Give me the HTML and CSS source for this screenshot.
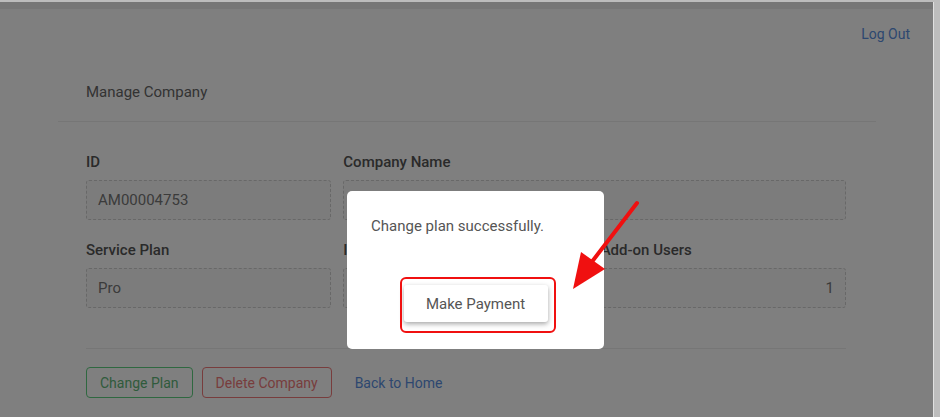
FILE: index.html
```html
<!DOCTYPE html>
<html lang="en">
<head>
    <meta charset="UTF-8">
    <meta name="viewport" content="width=device-width, initial-scale=1.0">
    <title>Manage Company</title>
    <link rel="stylesheet" href="styles.css">
</head>
<body>
    <div class="viewport">
        <div class="topbar"></div>
        <div class="nav">
            <a href="#" class="link">Log Out</a>
        </div>

        <div class="card">
            <div class="card-header">Manage Company</div>
            <div class="card-body">
                <div class="grid">
                    <div class="field">
                        <label>ID</label>
                        <div class="box">AM00004753</div>
                    </div>
                    <div class="field span-2">
                        <label>Company Name</label>
                        <div class="box"></div>
                    </div>
                    <div class="field">
                        <label>Service Plan</label>
                        <div class="box">Pro</div>
                    </div>
                    <div class="field">
                        <label>Included Users</label>
                        <div class="box"></div>
                    </div>
                    <div class="field">
                        <label>Add-on Users</label>
                        <div class="box right">1</div>
                    </div>
                </div>

                <div class="actions">
                    <button class="btn btn-green">Change Plan</button>
                    <button class="btn btn-red">Delete Company</button>
                    <a href="#" class="link back">Back to Home</a>
                </div>
            </div>
        </div>

        <!-- modal -->
        <div class="backdrop">
            <div class="modal">
                <p class="modal-text">Change plan successfully.</p>
                <div class="modal-footer">
                    <button class="pay">Make Payment</button>
                    <span class="highlight"></span>
                </div>
            </div>
            <svg class="arrow" width="80" height="100" viewBox="0 0 80 100">
                <line x1="72" y1="8" x2="26" y2="68" stroke="#f01010" stroke-width="4" stroke-linecap="round"/>
                <polygon points="8,94 16,57 40,74" fill="#f01010"/>
            </svg>
        </div>
    </div>
</body>
</html>
```

FILE: styles.css
```css
* {
    box-sizing: border-box;
    margin: 0;
    padding: 0;
}
body {
    background: #bdbdbd;
    font-family: Roboto, "Liberation Sans", sans-serif;
    overflow: hidden;
}
.viewport {
    position: relative;
    width: 934px;
    height: 415px;
    margin-top: 2px;
    background: #fff;
    border-right: 1px solid #e0e0e0;
    overflow: hidden;
}
.topbar {
    height: 7px;
    background: #eee;
}
.nav {
    display: flex;
    justify-content: flex-end;
    padding: 17px 23px 0 0;
    height: 56px;
}
.link {
    color: #5a8fe0;
    font-size: 14px;
    text-decoration: none;
}
.card {
    margin-left: 58px;
    width: 818px;
}
.card-header {
    padding: 18px 28px 20px;
    font-size: 15px;
    color: #666;
    border-bottom: 1px solid #ececec;
}
.card-body {
    padding: 30px 30px 0 28px;
}
.grid {
    display: grid;
    grid-template-columns: repeat(3, 1fr);
    column-gap: 12px;
    row-gap: 20px;
}
.span-2 {
    grid-column: span 2;
}
.field label {
    display: block;
    font-size: 15px;
    font-weight: 500;
    color: #555;
    line-height: 20px;
    margin-bottom: 8px;
}
.box {
    height: 40px;
    border: 1px dashed #d0d0d0;
    border-radius: 3px;
    background: #f9f9f9;
    padding: 0 11px;
    display: flex;
    align-items: center;
    font-size: 15px;
    color: #777;
}
.box.right {
    justify-content: flex-end;
}
.actions {
    margin-top: 40px;
    border-top: 1px solid #ececec;
    padding-top: 18px;
    display: flex;
    align-items: center;
    gap: 9px;
}
.btn {
    height: 31px;
    padding: 0 13px;
    background: #fff;
    border-radius: 4px;
    font-family: inherit;
    font-size: 14px;
}
.btn-green {
    border: 1px solid #5fd080;
    color: #5fb678;
}
.btn-red {
    border: 1px solid #f07a7a;
    color: #f07a7a;
}
.back {
    margin-left: 14px;
}
.backdrop {
    position: absolute;
    inset: 0;
    background: rgba(0, 0, 0, 0.5);
}
.modal {
    position: absolute;
    left: 347px;
    top: 189px;
    width: 257px;
    height: 158px;
    background: #fff;
    border-radius: 5px;
    padding: 25px 24px 0;
}
.modal-text {
    font-size: 15px;
    color: #555;
    line-height: 20px;
}
.modal-footer {
    position: relative;
    display: flex;
    justify-content: center;
    margin-top: 49px;
}
.pay {
    width: 144px;
    height: 37px;
    background: #fff;
    border: none;
    border-radius: 3px;
    box-shadow: 0 2px 5px rgba(0, 0, 0, 0.35);
    font-family: inherit;
    font-size: 15px;
    color: #555;
}
.highlight {
    position: absolute;
    left: 29px;
    top: -8px;
    width: 156px;
    height: 56px;
    border: 2px solid #f01010;
    border-radius: 6px;
}
.arrow {
    position: absolute;
    left: 565px;
    top: 193px;
}
```
